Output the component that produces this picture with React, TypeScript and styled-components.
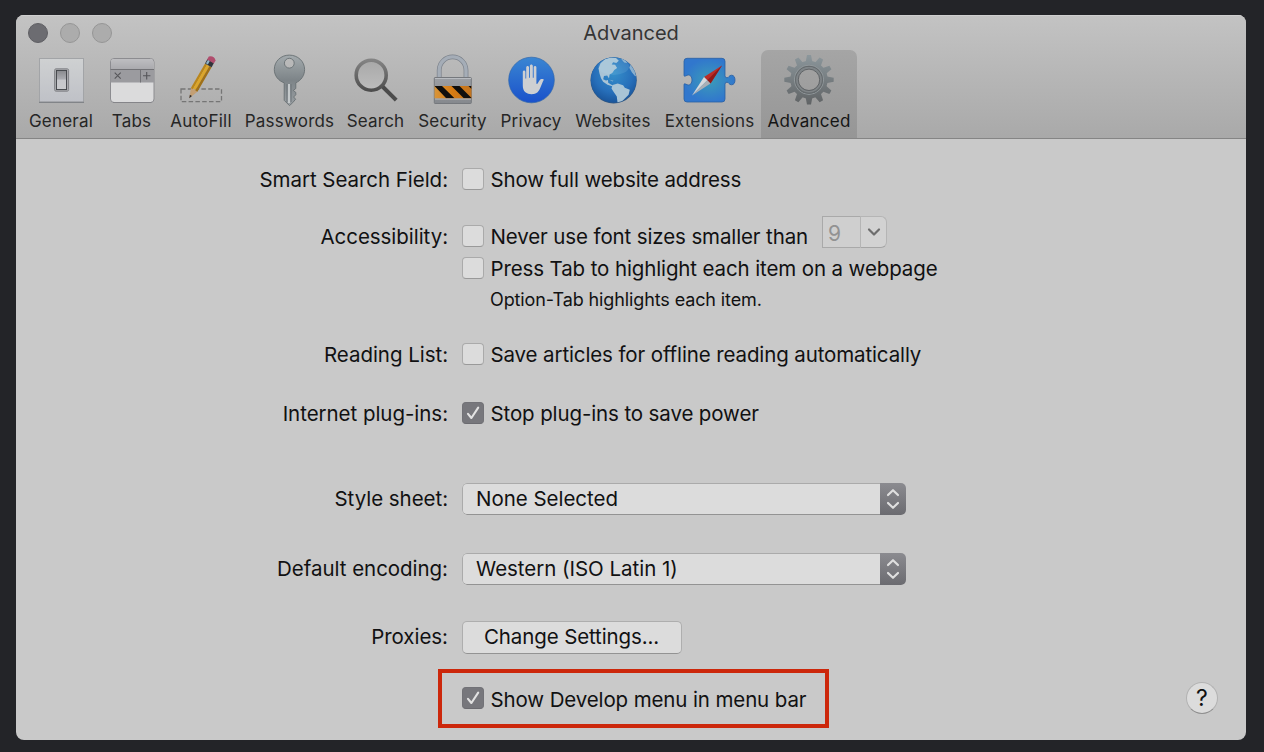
import React from 'react';
import styled, { createGlobalStyle } from 'styled-components';

const GlobalStyle = createGlobalStyle`
  body { margin: 0; background: #232428; font-family: Inter, "Liberation Sans", sans-serif; color: #111112; }
  * { box-sizing: border-box; }
`;

const Desktop = styled.div`
  width: 1264px;
  height: 752px;
  padding: 15px 18px 12px 16px;
  background: #232428;
  overflow: hidden;
`;

const Window = styled.main`
  display: flex;
  flex-direction: column;
  height: 725px;
  border-radius: 8px;
  background: #c9c9c9;
  overflow: hidden;
`;

const Header = styled.header`
  height: 124px;
  flex: none;
  background: linear-gradient(#c3c3c3, #a9a9a9);
  border-bottom: 1px solid #858585;
  box-shadow: inset 0 1px #cfcfcf;
`;

const TitleBar = styled.div`
  display: grid;
  grid-template-columns: 200px 1fr 200px;
  height: 35px;
`;

const Lights = styled.div`
  display: flex;
  gap: 12px;
  padding: 8px 0 0 12px;
`;

const Light = styled.span<{ $active?: boolean }>`
  width: 20px;
  height: 20px;
  border-radius: 50%;
  border: 1px solid ${p => (p.$active ? '#5f5f64' : '#969696')};
  background: ${p => (p.$active ? '#6c6c71' : '#acacac')};
`;

const Title = styled.h1`
  margin: 0;
  text-align: center;
  font-size: 20px;
  font-weight: 400;
  line-height: 37px;
  color: #353535;
`;

const Toolbar = styled.nav`
  display: flex;
  padding-left: 6px;
`;

const Tool = styled.button<{ $width: number; $selected?: boolean }>`
  display: flex;
  flex-direction: column;
  align-items: center;
  width: ${p => p.$width}px;
  height: 88px;
  padding: 2px 0 0;
  border: 0;
  border-radius: 7px 7px 0 0;
  background: ${p => (p.$selected ? 'linear-gradient(#a5a5a5, #969696)' : 'none')};
  color: ${p => (p.$selected ? '#151515' : '#262626')};
  font: 17px/26px Inter, sans-serif;
  letter-spacing: 0.22px;
  white-space: nowrap;
  svg { flex: none; display: block; }
`;

const Form = styled.section`
  position: relative;
  flex: 1;
  padding-top: 24px;
`;

const Row = styled.div<{ $before?: number }>`
  display: flex;
  align-items: center;
  height: 32px;
  margin-top: ${p => p.$before ?? 0}px;
`;

const Label = styled.span<{ $raised?: boolean }>`
  width: 432px;
  margin-right: 14px;
  padding: ${p => (p.$raised ? '0 0 1px' : '1px 0 0')};
  text-align: right;
  font-size: 20.5px;
  line-height: 31px;
  letter-spacing: -0.04px;
`;

const Option = styled.label`
  display: flex;
  align-items: center;
  gap: 6.5px;
  padding-top: 1px;
  font-size: 20.5px;
  line-height: 31px;
  letter-spacing: -0.12px;
  white-space: nowrap;
`;

const Box = styled.span<{ $on?: boolean }>`
  display: grid;
  place-items: center;
  width: 22px;
  height: 22px;
  margin-top: -2px;
  border-radius: 4px;
  border: 1px solid ${p => (p.$on ? '#727277' : '#aaaaaa')};
  border-bottom-color: ${p => (p.$on ? '#6b6b70' : '#999999')};
  background: ${p => (p.$on ? '#77777c' : '#dcdcdc')};
`;

const Hint = styled.p`
  margin: 0;
  padding-left: 474px;
  font-size: 18px;
  line-height: 32px;
  letter-spacing: -0.12px;
`;

const Combo = styled.span`
  display: flex;
  width: 65px;
  height: 32px;
  margin: -8px 0 0 14px;
`;

const ComboValue = styled.span`
  width: 38px;
  padding-left: 5px;
  border: 1px solid #a9a9a9;
  border-right: 0;
  background: #cfcfcf;
  color: #929292;
  font-size: 21px;
  line-height: 33px;
`;

const ComboArrow = styled.span`
  display: grid;
  place-items: center;
  width: 27px;
  border: 1px solid #b5b5b5;
  border-bottom-color: #a5a5a5;
  border-radius: 0 6px 6px 0;
  background: #d2d2d2;
`;

const Select = styled.div`
  display: flex;
  width: 444px;
  height: 32px;
  border-radius: 5px;
  background: #dcdcdc;
  overflow: hidden;
`;

const SelectValue = styled.span`
  flex: 1;
  padding-left: 13px;
  border: 1px solid #aaaaaa;
  border-bottom-color: #939393;
  border-right: 0;
  border-radius: 5px 0 0 5px;
  font-size: 20.5px;
  line-height: 29px;
  letter-spacing: -0.03px;
`;

const SelectArrows = styled.span`
  display: grid;
  place-items: center;
  width: 26px;
  background: linear-gradient(#8b8b90, #6b6b70);
`;

const PushButton = styled.button`
  width: 220px;
  height: 33px;
  padding: 0 1px 0 0;
  border: 1px solid #aeaeae;
  border-bottom-color: #939393;
  border-radius: 5px;
  background: #dcdcdc;
  color: inherit;
  font: 20.5px/30px Inter, sans-serif;
  letter-spacing: -0.12px;
`;

const Highlight = styled.div`
  display: flex;
  align-items: center;
  width: 391px;
  height: 59px;
  margin: 16px 0 0 422px;
  padding-left: 20px;
  border: 4px solid #cc270b;
`;

const Help = styled.button`
  position: absolute;
  right: 28px;
  bottom: 26px;
  width: 32px;
  height: 32px;
  padding: 0;
  border: 1px solid #b2b2b2;
  border-bottom-color: #8e8e8e;
  border-radius: 50%;
  background: #dcdcdc;
  color: #111112;
  font: 400 23px/31px Inter, sans-serif;
`;

const Check = () => (
  <svg width="18" height="18" viewBox="0 0 18 18" fill="none" stroke="#e2e2e2" strokeWidth="2.1" strokeLinecap="round" strokeLinejoin="round">
    <path d="M4 9.8 7.4 14 14.2 3.6" />
  </svg>
);

const Arrows = () => (
  <svg width="26" height="32" fill="none" stroke="#dfdfdf" strokeWidth="2.2" strokeLinecap="round" strokeLinejoin="round">
    <path d="m8 12 5-4.8L18 12M8 20l5 4.8 5-4.8" />
  </svg>
);

const GeneralIcon = () => (
  <svg width="78" height="56">
    <defs>
      <linearGradient id="plate" x2="0" y2="1"><stop stopColor="#cfd1d2" /><stop offset="1" stopColor="#bfc1c7" /></linearGradient>
      <linearGradient id="rocker" x2="0" y2="1"><stop stopColor="#88898d" /><stop offset=".45" stopColor="#aaabb0" /><stop offset=".5" stopColor="#c6c7cb" /><stop offset="1" stopColor="#c9cacd" /></linearGradient>
    </defs>
    <rect x="17.5" y="6.5" width="44" height="43.5" fill="url(#plate)" stroke="#a2a4a7" strokeWidth="1" />
    <path d="M17 50.3h45" stroke="#777b80" />
    <rect x="32.6" y="16.8" width="14" height="22.4" rx="1.5" fill="#bcbdc0" stroke="#808286" />
    <rect x="34.4" y="18.4" width="10.2" height="19.2" fill="url(#rocker)" stroke="#45474b" strokeWidth="1.1" />
  </svg>
);

const TabsIcon = () => (
  <svg width="63" height="56">
    <defs><linearGradient id="tabTop" x2="0" y2="1"><stop stopColor="#bebec1" /><stop offset="1" stopColor="#a9a9ad" /></linearGradient></defs>
    <rect x="10.5" y="6.5" width="43.5" height="44" rx="3.5" fill="#dbdbdc" stroke="#8c8c90" />
    <path d="M11 17.5V10q0-3 3-3h36.5q3 0 3 3v7.5Z" fill="url(#tabTop)" />
    <path d="M10.5 17.5h43.5v13h-43.5Z" fill="#9b9b9f" />
    <path d="M10.5 17.5h43.500M40.5 17.5v13" stroke="#727276" />
    <path d="m14.7 20.700 6 6m0-6-6 6M43 23.700h7.400M46.700 20v7.400" stroke="#56565a" strokeWidth="1.1" />
    <path d="M13 50.5h38.5" stroke="#858589" />
  </svg>
);

const AutoFillIcon = () => (
  <svg width="76" height="56">
    <rect x="18" y="37" width="40.5" height="12.7" fill="none" stroke="#757575" strokeWidth="1.3" strokeDasharray="4.5 2.3" />
    <g transform="translate(26.3 46.2) rotate(30)">
      <path d="M0 0-3.8-10h7.600Z" fill="#c39f74" />
      <path d="M0 0-1.200-3.200h2.400Z" fill="#2b2728" />
      <path d="M-3.800-9.700h2.500V-38h-2.500Z" fill="#b9861d" />
      <path d="M-1.500-10.300h3V-38h-3Z" fill="#dba62c" />
      <path d="M1.300-9.700h2.500V-38H1.300Z" fill="#9f7018" />
      <path d="M-3.800-38h7.600v-5h-7.600Z" fill="#30343b" />
      <path d="M-3-38.500h2.200v-4.200h-2.200Z" fill="#8fb4c8" />
      <path d="M-3.900-42.300h7.800v-3.500q-3.900-3.600-7.800 0Z" fill="#b04d6d" />
    </g>
  </svg>
);

const KeyIcon = () => (
  <svg width="101" height="56">
    <defs><linearGradient id="keyFill" x2="0" y2="1"><stop stopColor="#a4abae" /><stop offset=".5" stopColor="#7d8488" /><stop offset="1" stopColor="#9a9fa3" /></linearGradient></defs>
    <g transform="translate(0 .6)">
      <path fillRule="evenodd" d="M50.300 2.500c-8.400 0-15 6.200-15 14.400 0 6.200 4 11.300 9.900 13.300v17.500l5.300 5.300 3.200-2.900 2.900-3.500-2-2.200 2.200-2.200v-2.400l-2.500-1.900 2.500-2V30.200c5.200-2.200 8.800-7.200 8.800-13.300 0-8.200-6.900-14.400-15.300-14.400Zm0 3.200a4.900 4.900 0 1 1 0 9.800 4.900 4.900 0 0 1 0-9.800Z" fill="url(#keyFill)" stroke="#686f73" strokeWidth=".9" />
      <path d="M50 31.500v19" stroke="#c4c9cb" strokeWidth="2" />
      <path d="M47.900 31.500v18M52.100 31.500v18" stroke="#6b7276" strokeWidth=".8" />
    </g>
  </svg>
);

const SearchIcon = () => (
  <svg width="71" height="56" fill="none">
    <defs>
      <linearGradient id="lens" x2="0" y2="1"><stop stopColor="#838383" /><stop offset="1" stopColor="#4e4e4e" /></linearGradient>
      <linearGradient id="glass" x2="0" y2="1"><stop stopColor="#a8a8a8" /><stop offset="1" stopColor="#bdbdbd" /></linearGradient>
    </defs>
    <path d="m42 34 14.200 14.200" stroke="#4b4b4b" strokeWidth="4" />
    <circle cx="31.200" cy="23.200" r="15" fill="url(#glass)" stroke="url(#lens)" strokeWidth="3.600" />
  </svg>
);

const LockIcon = () => (
  <svg width="83" height="56">
    <defs>
      <linearGradient id="lockBody" x2="0" y2="1"><stop stopColor="#9c9fa4" /><stop offset="1" stopColor="#85888d" /></linearGradient>
      <linearGradient id="amber"><stop stopColor="#d8953a" /><stop offset=".5" stopColor="#d77b13" /><stop offset="1" stopColor="#c17420" /></linearGradient>
      <clipPath id="band"><path d="M23.500 34h37v12.300h-37z" /></clipPath>
    </defs>
    <g fill="none">
      <path d="M28.200 26V18.300a13.400 13.400 0 0 1 26.800 0V26" stroke="#7c828b" strokeWidth="4.800" />
      <path d="M28.200 26V18.300a13.400 13.400 0 0 1 26.800 0V26" stroke="#a5adb7" strokeWidth="3.400" />
    </g>
    <rect x="23.300" y="25.500" width="37" height="26" rx=".8" fill="url(#lockBody)" stroke="#75787d" />
    <path d="M24 26.500h36M24 47h36" stroke="#b8bbc0" />
    <path d="M23.500 34h37v12.300h-37z" fill="url(#amber)" />
    <path d="M23.500 34h7.500l12.500 12.300h-8.300ZM40.500 34h8l12.300 12.300h-8ZM57.500 34h3v3Z" clipPath="url(#band)" fill="#100f0e" />
  </svg>
);

const PrivacyIcon = () => (
  <svg width="74" height="56">
    <defs><linearGradient id="privacy" x2="0" y2="1"><stop stopColor="#3a86d2" /><stop offset="1" stopColor="#1a51cb" /></linearGradient></defs>
    <circle cx="37.500" cy="28" r="22.800" fill="url(#privacy)" stroke="#2c65ad" strokeWidth=".7" />
    <path d="M28.800 20c0-2 2.600-2 2.600 0v6.500h.8V15.400c0-2 2.800-2 2.800 0v10.300h.9V14c0-2 2.900-2 2.900 0v11.700h.9V15.400c0-2 2.700-2 2.700 0v16.300l.8.400 2.600-4c1-1.500 3.800-1.100 4.100-.3-2.200 3.100-3.500 10-6.300 12.500-2.800 2.500-9.200 2.500-12.200 0-2-1.700-2.600-3.900-2.600-6.500Z" fill="#cdcfd2" />
  </svg>
);

const GlobeIcon = () => (
  <svg width="90" height="56">
    <defs>
      <radialGradient id="ocean" cx=".5" cy=".35" r=".7"><stop stopColor="#358fca" /><stop offset=".6" stopColor="#276fba" /><stop offset="1" stopColor="#174f93" /></radialGradient>
      <clipPath id="sphere"><circle cx="45.600" cy="28" r="22.700" /></clipPath>
    </defs>
    <circle cx="45.600" cy="28.300" r="23.100" fill="#325780" />
    <circle cx="45.600" cy="28" r="22.800" fill="url(#ocean)" />
    <g clipPath="url(#sphere)" fill="#a9c4d6">
      <path d="m32.500 11.200 4.500-4 6-1.800 5 .7 2.800 2.600-2.500 2.300-3.200-.8-1.400 2.200 3.400.3 2 3.300-2.800 2-2 3-2.700 1.600-.6 3.800-1.800-2.800-3.200.5-.8 3.200 2.800 1.300 2-.5.2 2.700 2.400 1.500 2.300 1.300-.8.6-4.600-1.500-4.400-3-2.100-3.500-1.500-4.800-1-5Z" />
      <path d="m44.500 33 5.200-1.400 5.400 1.700 1.700 2.500 5 2-1.200 5-3.500 3.500-4.300 4.500-3.200.6-.8-6.800-3.600-5.300-1.700-2.900Z" />
      <path d="m62.500 12.500 4 4.300 2.200 7-1.600.5-3.300-4-2.500-4.500ZM52 5.500l5 2.200 2.400 3.200-3.200-.5ZM41 27.500l4.500 1.300-.8.800Z" opacity=".75" />
    </g>
    <ellipse cx="45.600" cy="14.500" rx="15.500" ry="8.500" fill="#bce7f4" opacity=".12" />
  </svg>
);

const ExtensionsIcon = () => (
  <svg width="103" height="56">
    <defs><radialGradient id="puzzle"><stop stopColor="#3b9cb8" /><stop offset="1" stopColor="#3177cd" /></radialGradient></defs>
    <path d="M29 6.300h35q3 0 3 3v14.500q0 2 2 2c1.800 0 2-2.600 4.500-2.600 2.400 0 3.500 2.100 3.500 4.800s-1.100 4.800-3.500 4.800c-2.500 0-2.700-2.600-4.500-2.600q-2 0-2 2v14.800q0 3-3 3H29q-3 0-3-3V32.200c.8-1.300 2.600.8 4.400.8 2.200 0 3.600-2.100 3.600-5s-1.400-5-3.600-5c-1.800 0-3.600 2.100-4.400.8V9.300q0-3 3-3Z" fill="url(#puzzle)" stroke="#2960a2" strokeWidth=".8" />
    <path d="m64 13.500-18 11.500 6.500 6.500Z" fill="#bb2d27" />
    <path d="m64 13.500-14.700 14.800 3.200 3.200Z" fill="#8f1a18" />
    <path d="M34 43.500 46 25l3.300 3.300Z" fill="#d7d9dc" />
    <path d="m34 43.500 15.300-15.200 3.200 3.200Z" fill="#aaafb5" />
  </svg>
);

const GearIcon = () => (
  <svg width="96" height="56">
    <defs><linearGradient id="steel" gradientUnits="userSpaceOnUse" x1="0" y1="-25" x2="0" y2="25"><stop stopColor="#8c979c" /><stop offset="1" stopColor="#606365" /></linearGradient></defs>
    <g transform="translate(48 27.800)">
      <g fill="none" stroke="url(#steel)">
        <circle r="14.700" strokeWidth="8" />
      </g>
      <g fill="url(#steel)">
        {Array.from({ length: 12 }, (_, i) => {
          const a = (i * Math.PI) / 6;
          const point = (x: number, y: number) => `${x * Math.cos(a) - y * Math.sin(a)},${x * Math.sin(a) + y * Math.cos(a)}`;
          return <polygon key={i} points={[point(-3.5, -17), point(-2, -24.7), point(2, -24.7), point(3.5, -17)].join(' ')} />;
        })}
      </g>
      <circle r="14.600" fill="none" stroke="#92999c" strokeWidth="1" />
      <circle r="13.400" fill="none" stroke="#666b6e" strokeWidth="1.200" />
      <circle r="11.900" fill="none" stroke="#7f8487" strokeWidth="1.800" />
      <circle r="10.700" fill="none" stroke="#5a5e61" strokeWidth=".9" />
    </g>
  </svg>
);

const tools = [
  { name: 'General', width: 78, Icon: GeneralIcon },
  { name: 'Tabs', width: 63, Icon: TabsIcon },
  { name: 'AutoFill', width: 76, Icon: AutoFillIcon },
  { name: 'Passwords', width: 101, Icon: KeyIcon },
  { name: 'Search', width: 71, Icon: SearchIcon },
  { name: 'Security', width: 83, Icon: LockIcon },
  { name: 'Privacy', width: 74, Icon: PrivacyIcon },
  { name: 'Websites', width: 90, Icon: GlobeIcon },
  { name: 'Extensions', width: 103, Icon: ExtensionsIcon },
  { name: 'Advanced', width: 96, Icon: GearIcon },
];

const CheckOption = ({ text, on }: { text: string; on?: boolean }) => (
  <Option><Box $on={on}>{on && <Check />}</Box>{text}</Option>
);

const Popup = ({ value }: { value: string }) => (
  <Select><SelectValue>{value}</SelectValue><SelectArrows><Arrows /></SelectArrows></Select>
);

export default function App() {
  return (
    <Desktop>
      <GlobalStyle />
      <Window>
        <Header>
          <TitleBar>
            <Lights><Light $active /><Light /><Light /></Lights>
            <Title>Advanced</Title>
          </TitleBar>
          <Toolbar>
            {tools.map(({ name, width, Icon }) => (
              <Tool key={name} $width={width} $selected={name === 'Advanced'}><Icon />{name}</Tool>
            ))}
          </Toolbar>
        </Header>
        <Form>
          <Row><Label>Smart Search Field:</Label><CheckOption text="Show full website address" /></Row>
          <Row $before={25}>
            <Label>Accessibility:</Label>
            <CheckOption text="Never use font sizes smaller than" />
            <Combo>
              <ComboValue>9</ComboValue>
              <ComboArrow>
                <svg width="16" height="12" fill="none" stroke="#6d6d6d" strokeWidth="2.200" strokeLinecap="round" strokeLinejoin="round"><path d="m3 3.500 5 5 5-5" /></svg>
              </ComboArrow>
            </Combo>
          </Row>
          <Row><Label /><CheckOption text="Press Tab to highlight each item on a webpage" /></Row>
          <Hint>Option-Tab highlights each item.</Hint>
          <Row $before={22}><Label>Reading List:</Label><CheckOption text="Save articles for offline reading automatically" /></Row>
          <Row $before={27}><Label>Internet plug-ins:</Label><CheckOption text="Stop plug-ins to save power" on /></Row>
          <Row $before={54}><Label $raised>Style sheet:</Label><Popup value="None Selected" /></Row>
          <Row $before={38}><Label $raised>Default encoding:</Label><Popup value="Western (ISO Latin 1)" /></Row>
          <Row $before={36}><Label $raised>Proxies:</Label><PushButton>Change Settings...</PushButton></Row>
          <Highlight><CheckOption text="Show Develop menu in menu bar" on /></Highlight>
          <Help>?</Help>
        </Form>
      </Window>
    </Desktop>
  );
}
